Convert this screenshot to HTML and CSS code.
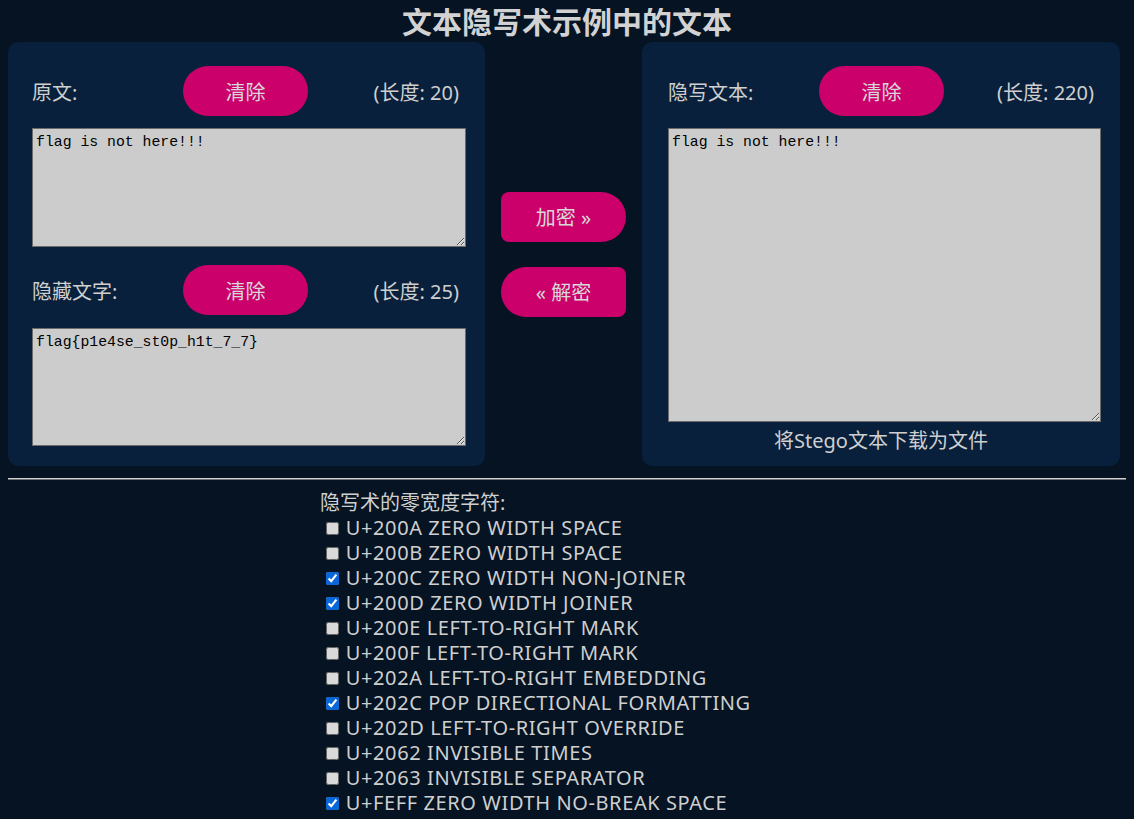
FILE: index.html
```html
<!DOCTYPE html>
<html>
<head lang="zh">
    <meta charset="UTF-8">
    <title>文本隐写术示例中的文本</title>
    <link rel="stylesheet" href="styles.css">
</head>
<body>
<h1 class="title">文本隐写术示例中的文本</h1>
<div class="main">
    <div class="panel panel-left">
        <div class="row">
            <span class="label">原文:</span>
            <button class="clear">清除</button>
            <span class="len">(长度: 20)</span>
        </div>
        <textarea class="box box-plain">flag is not here!!!</textarea>
        <div class="row row-second">
            <span class="label">隐藏文字:</span>
            <button class="clear">清除</button>
            <span class="len">(长度: 25)</span>
        </div>
        <textarea class="box box-hidden">flag{p1e4se_st0p_h1t_7_7}</textarea>
    </div>
    <div class="actions">
        <button class="act act-enc">加密 »</button>
        <button class="act act-dec">« 解密</button>
    </div>
    <div class="panel panel-right">
        <div class="row">
            <span class="label">隐写文本:</span>
            <button class="clear">清除</button>
            <span class="len">(长度: 220)</span>
        </div>
        <textarea class="box box-stego">flag is not here!!!</textarea>
        <div class="download">将Stego文本下载为文件</div>
    </div>
</div>
<hr class="line">
<div class="chars">
    <div class="chars-title">隐写术的零宽度字符:</div>
    <label class="item"><input type="checkbox"> U+200A ZERO WIDTH SPACE</label>
    <label class="item"><input type="checkbox"> U+200B ZERO WIDTH SPACE</label>
    <label class="item"><input type="checkbox" checked> U+200C ZERO WIDTH NON-JOINER</label>
    <label class="item"><input type="checkbox" checked> U+200D ZERO WIDTH JOINER</label>
    <label class="item"><input type="checkbox"> U+200E LEFT-TO-RIGHT MARK</label>
    <label class="item"><input type="checkbox"> U+200F LEFT-TO-RIGHT MARK</label>
    <label class="item"><input type="checkbox"> U+202A LEFT-TO-RIGHT EMBEDDING</label>
    <label class="item"><input type="checkbox" checked> U+202C POP DIRECTIONAL FORMATTING</label>
    <label class="item"><input type="checkbox"> U+202D LEFT-TO-RIGHT OVERRIDE</label>
    <label class="item"><input type="checkbox"> U+2062 INVISIBLE TIMES</label>
    <label class="item"><input type="checkbox"> U+2063 INVISIBLE SEPARATOR</label>
    <label class="item"><input type="checkbox" checked> U+FEFF ZERO WIDTH NO-BREAK SPACE</label>
</div>
</body>
</html>
```

FILE: styles.css
```css
/*reset*/
body,h1,hr,div{margin:0;padding:0}
body{
    margin:8px;
    background:#051322;
    color:#cfcfcf;
    font-family:"Noto Sans","Noto Sans CJK SC",sans-serif;
    font-size:20px;
}
button{font-family:inherit;cursor:pointer;border:0;outline:none;}

.title{
    font-size:30px;
    line-height:28px;
    text-align:center;
    font-weight:bold;
    color:#d2d2d2;
    margin-bottom:6px;
}

.main{
    display:flex;
}
.panel{
    background:#08203b;
    border-radius:10px;
    box-sizing:border-box;
    height:424px;
}
.panel-left{
    width:477px;
    padding:24px 19px 20px 24px;
}
.panel-right{
    width:478px;
    padding:24px 19px 6px 26px;
}

.row{
    display:grid;
    grid-template-columns:151px 125px 1fr;
    align-items:center;
    height:50px;
    margin-bottom:12px;
    padding-right:7px;
}
.row-second{
    margin-top:18px;
    margin-bottom:13px;
}
.label{
    white-space:nowrap;
}
.len{
    text-align:right;
    white-space:nowrap;
}
.clear{
    height:50px;
    border-radius:25px;
    background:#cc006b;
    color:#d8d8d8;
    font-size:20px;
}

.box{
    display:block;
    width:434px;
    box-sizing:border-box;
    background:#cccccc;
    border:1px solid #6b6b6b;
    font-family:"Liberation Mono",monospace;
    font-size:14.8px;
    line-height:18px;
    color:#000;
    padding:4px 3px 2px;
    margin:0;
}
.box-plain{height:119px;}
.box-hidden{height:118px;}
.box-stego{height:294px;width:433px;}

.download{
    text-align:center;
    line-height:38px;
    padding-right:7px;
}

.actions{
    width:157px;
    display:flex;
    flex-direction:column;
    justify-content:center;
    align-items:center;
    gap:25px;
}
.act{
    width:125px;
    height:50px;
    background:#cc006b;
    color:#d8d8d8;
    font-size:20px;
}
.act-enc{border-radius:8px 25px 25px 8px;}
.act-dec{border-radius:25px 8px 8px 25px;}

.line{
    border:0;
    border-top:1px solid #d0d0d0;
    border-bottom:1px solid #6e737a;
    margin:12px -8px 0 0;
}

.chars{
    padding-left:312px;
    padding-top:10px;
}
.chars-title{
    font-size:20px;
    line-height:25px;
}
.item{
    display:block;
    line-height:25px;
    font-size:20px;
    letter-spacing:0.6px;
}
.item input{
    margin:0 1px 0 6px;
    width:13px;
    height:13px;
    accent-color:#0b66d6;
}
.item input:not(:checked){
    filter:brightness(0.85);
}
```
